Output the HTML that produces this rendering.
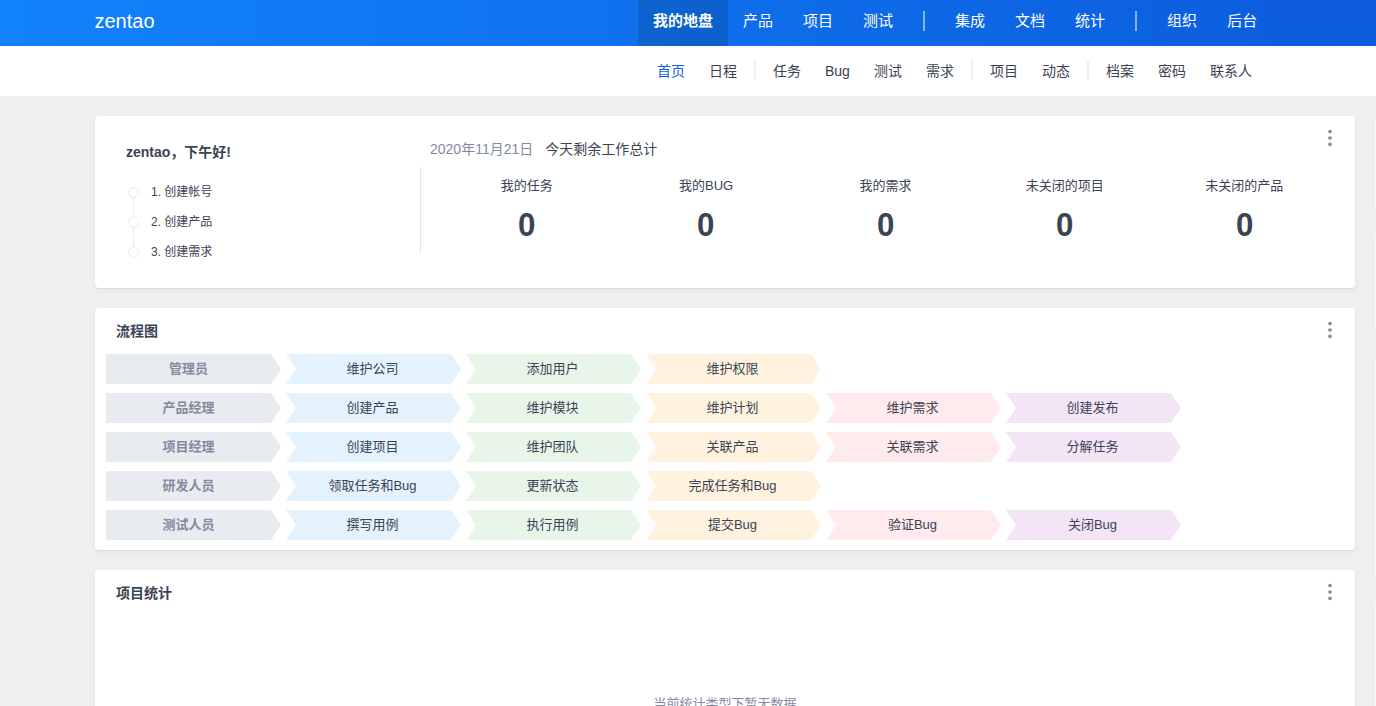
<!DOCTYPE html>
<html lang="zh-CN">
<head>
<meta charset="utf-8">
<title>zentao</title>
<style>
*{box-sizing:border-box;margin:0;padding:0}
html,body{width:1376px;height:706px;overflow:hidden}
body{background:#efefef;font-family:"Liberation Sans","Noto Sans CJK SC",sans-serif;font-size:13px;color:#3c4353;position:relative}
#header{position:absolute;left:0;top:0;width:1376px;height:46px;background:linear-gradient(90deg,#1183fb 0%,#0c5bdc 100%)}
#logo{position:absolute;left:94.5px;top:0;height:46px;line-height:43px;font-size:20px;color:#fff}
#nav{position:absolute;left:638px;top:0;height:46px;display:flex}
#nav a{display:block;height:46px;line-height:42px;padding:0 15px;font-size:15px;color:#fff;text-decoration:none;white-space:nowrap}
#nav a.active{background:rgba(0,0,0,.12);font-weight:bold}
#nav i{display:block;width:32px;height:46px;position:relative}
#nav i:after{content:"";position:absolute;left:15px;top:11px;width:2px;height:20px;background:rgba(255,255,255,.5)}
#subnav{position:absolute;left:0;top:46px;width:1376px;height:50px;background:#fff}
#subnav ul{position:absolute;left:645px;top:0;height:50px;display:flex;list-style:none}
#subnav li{height:50px;line-height:50px;padding:0 12px;font-size:14px;color:#3c4353;white-space:nowrap}
#subnav li.active{color:#0c64eb}
#subnav li.div{padding:0;width:12px;position:relative}
#subnav li.div:after{content:"";position:absolute;left:5px;top:14px;width:2px;height:20px;background:#eff0f2}
.card{position:absolute;left:95px;width:1260px;background:#fff;border-radius:4px;box-shadow:0 1px 1px rgba(0,0,0,.06),0 2px 6px 0 rgba(0,0,0,.045)}
.card h3{position:absolute;left:21px;top:13px;font-size:14px;font-weight:bold;color:#3c4353;line-height:20px}
.more{position:absolute;right:21px;top:12px;width:8px;height:20px;display:block}
#c1{top:116px;height:172px}
#c2{top:308px;height:242px}
#c3{top:570px;height:200px}
#hello{position:absolute;left:31px;top:26px;font-size:14px;font-weight:bold;line-height:20px;color:#3c4353}
#steps{position:absolute;left:31px;top:60px;list-style:none}
#steps li{position:relative;height:30px;line-height:32px;padding-left:25px;font-size:12px;color:#3c4353}
#steps li:before{content:"";position:absolute;left:2px;top:11px;width:9px;height:9px;border:1px solid #ebebeb;border-radius:50%;background:#fff;z-index:1}
#steps li:after{content:"";position:absolute;left:7px;top:21px;width:1px;height:20px;background:#ebebeb}
#steps li:last-child:after{display:none}
#vline{position:absolute;left:325px;top:51px;width:1px;height:87px;background:#e5e5e5}
#date{position:absolute;left:335px;top:23px;font-size:14px;line-height:20px;color:#838a9d;white-space:nowrap}
#date span{color:#3c4353;margin-left:12px}
#tiles{position:absolute;left:342px;top:58px;width:897px;display:flex}
#tiles div{width:20%;text-align:center}
#tiles p{font-size:13px;line-height:24px;color:#3c4353}
#tiles strong{display:block;font-size:34px;line-height:54px;color:#3c4353;font-weight:bold;transform:scaleX(.92);position:relative;top:-1px}
#flow{position:absolute;left:11px;top:46px}
.row{height:30px;margin-bottom:9px;display:flex}
.fi{position:relative;width:165px;height:30px;line-height:30px;margin-right:15px;text-align:center;font-size:13px;color:#3c4353;padding-left:8px}
.fi:before{content:"";position:absolute;left:0;top:0;border-style:solid;border-width:15px 0 15px 10px;border-color:transparent transparent transparent #fff}
.fi:after{content:"";position:absolute;right:-10px;top:0;border-style:solid;border-width:15px 0 15px 10px;border-color:transparent}
.f0{background:#e8ecf1;color:#838a9d;font-weight:bold;padding-left:0}.f0:before{display:none}.f0:after{border-left-color:#e8ecf1}
.f1{background:#e3f2fd}.f1:after{border-left-color:#e3f2fd}
.f2{background:#e8f5e9}.f2:after{border-left-color:#e8f5e9}
.f3{background:#fff3e0}.f3:after{border-left-color:#fff3e0}
.f4{background:#ffebee}.f4:after{border-left-color:#ffebee}
.f5{background:#f3e5f5}.f5:after{border-left-color:#f3e5f5}
#empty{position:absolute;left:0;top:124px;width:1260px;text-align:center;font-size:13px;line-height:20px;color:#838a9d}
.edge{position:absolute;left:1375px;width:1px;background:#f8f8f8}
</style>
</head>
<body>
<div id="header">
  <div id="logo">zentao</div>
  <div id="nav"><a class="active">我的地盘</a><a>产品</a><a>项目</a><a>测试</a><i></i><a>集成</a><a>文档</a><a>统计</a><i></i><a>组织</a><a>后台</a></div>
</div>
<div id="subnav">
  <ul><li class="active">首页</li><li>日程</li><li class="div"></li><li>任务</li><li>Bug</li><li>测试</li><li>需求</li><li class="div"></li><li>项目</li><li>动态</li><li class="div"></li><li>档案</li><li>密码</li><li>联系人</li></ul>
</div>
<div class="card" id="c1">
  <svg class="more" viewBox="0 0 8 20"><circle cx="4" cy="3.6" r="1.8" fill="#838a9d"/><circle cx="4" cy="10" r="1.8" fill="#838a9d"/><circle cx="4" cy="16.4" r="1.8" fill="#838a9d"/></svg>
  <div id="hello">zentao，下午好!</div>
  <ul id="steps"><li>1. 创建帐号</li><li>2. 创建产品</li><li>3. 创建需求</li></ul>
  <div id="vline"></div>
  <div id="date">2020年11月21日<span>今天剩余工作总计</span></div>
  <div id="tiles">
    <div><p>我的任务</p><strong>0</strong></div>
    <div><p>我的BUG</p><strong>0</strong></div>
    <div><p>我的需求</p><strong>0</strong></div>
    <div><p>未关闭的项目</p><strong>0</strong></div>
    <div><p>未关闭的产品</p><strong>0</strong></div>
  </div>
</div>
<div class="card" id="c2">
  <h3>流程图</h3>
  <svg class="more" viewBox="0 0 8 20"><circle cx="4" cy="3.6" r="1.8" fill="#838a9d"/><circle cx="4" cy="10" r="1.8" fill="#838a9d"/><circle cx="4" cy="16.4" r="1.8" fill="#838a9d"/></svg>
  <div id="flow">
    <div class="row"><div class="fi f0">管理员</div><div class="fi f1">维护公司</div><div class="fi f2">添加用户</div><div class="fi f3">维护权限</div></div>
    <div class="row"><div class="fi f0">产品经理</div><div class="fi f1">创建产品</div><div class="fi f2">维护模块</div><div class="fi f3">维护计划</div><div class="fi f4">维护需求</div><div class="fi f5">创建发布</div></div>
    <div class="row"><div class="fi f0">项目经理</div><div class="fi f1">创建项目</div><div class="fi f2">维护团队</div><div class="fi f3">关联产品</div><div class="fi f4">关联需求</div><div class="fi f5">分解任务</div></div>
    <div class="row"><div class="fi f0">研发人员</div><div class="fi f1">领取任务和Bug</div><div class="fi f2">更新状态</div><div class="fi f3">完成任务和Bug</div></div>
    <div class="row"><div class="fi f0">测试人员</div><div class="fi f1">撰写用例</div><div class="fi f2">执行用例</div><div class="fi f3">提交Bug</div><div class="fi f4">验证Bug</div><div class="fi f5">关闭Bug</div></div>
  </div>
</div>
<div class="card" id="c3">
  <h3>项目统计</h3>
  <svg class="more" viewBox="0 0 8 20"><circle cx="4" cy="3.6" r="1.8" fill="#838a9d"/><circle cx="4" cy="10" r="1.8" fill="#838a9d"/><circle cx="4" cy="16.4" r="1.8" fill="#838a9d"/></svg>
  <div id="empty">当前统计类型下暂无数据</div>
</div>
<div class="edge" style="top:117px;height:93px"></div><div class="edge" style="top:235px;height:96px"></div><div class="edge" style="top:356px;height:221px"></div><div class="edge" style="top:602px;height:110px"></div>
</body>
</html>
